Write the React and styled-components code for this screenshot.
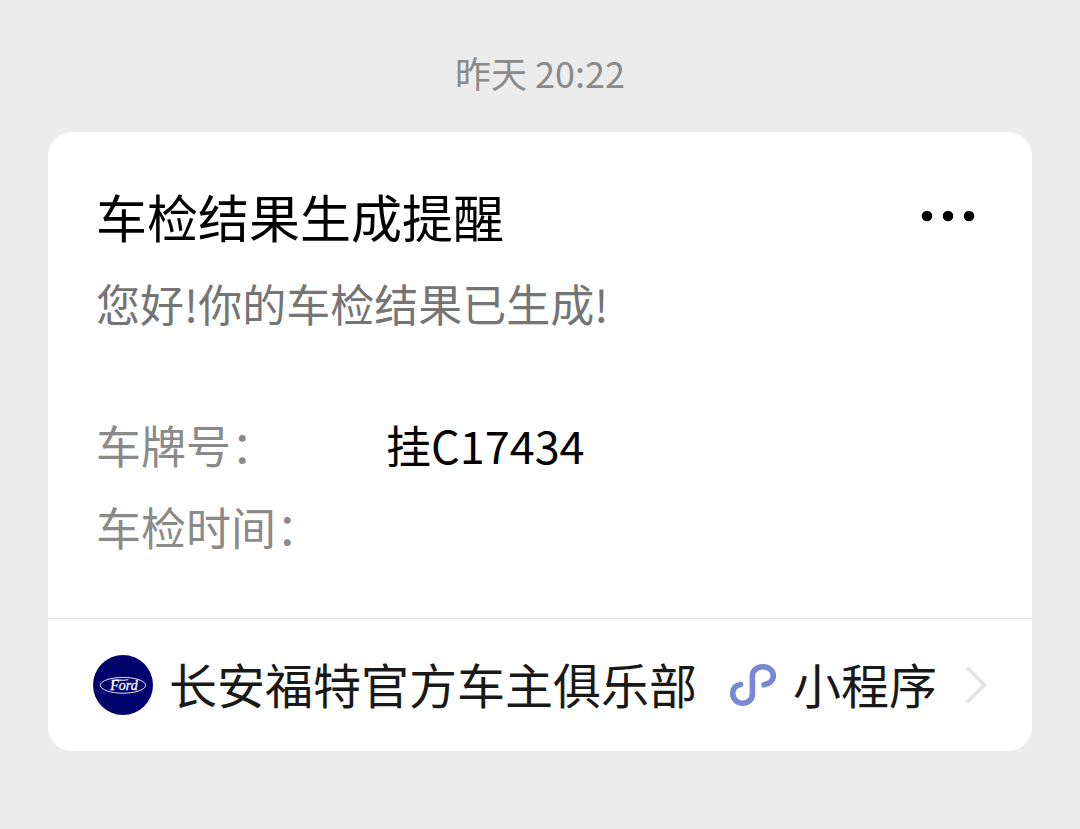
import React from "react";
import styled, { createGlobalStyle } from "styled-components";

const GlobalStyle = createGlobalStyle`
  *, *::before, *::after { box-sizing: border-box; }
  body {
    margin: 0;
    background: #ececec;
    font-family: "Noto Sans CJK SC", "Noto Sans", sans-serif;
    font-weight: 400;
  }
`;

const Page = styled.main`
  padding: 46px 48px;
`;

const Timestamp = styled.time`
  display: block;
  text-align: center;
  font-size: 36px;
  line-height: 52px;
  color: #8a8a8a;
`;

const Card = styled.article`
  margin-top: 34px;
  background: #fff;
  border-radius: 24px;
  overflow: hidden;
`;

const CardBody = styled.div`
  padding: 46px 48px 50px;
`;

const CardHeader = styled.header`
  display: flex;
  align-items: center;
  justify-content: space-between;
`;

const Title = styled.h1`
  margin: 0;
  font-size: 51px;
  line-height: 76px;
  font-weight: 400;
  color: #000;
`;

const MoreButton = styled.button`
  display: flex;
  padding: 9px;
  border: 0;
  background: none;
  color: #000;
  cursor: pointer;
`;

const Message = styled.p`
  margin: 8px 0 0;
  font-size: 44px;
  line-height: 82px;
  color: #757575;
`;

const Details = styled.dl`
  display: grid;
  grid-template-columns: 290px 1fr;
  grid-auto-rows: 82px;
  margin: 60px 0 0;
  font-size: 45px;
  line-height: 82px;
`;

const DetailLabel = styled.dt`
  color: #8a8a8a;
`;

const DetailValue = styled.dd`
  margin: 0;
  color: #000;
`;

const AccountLink = styled.a`
  display: flex;
  align-items: center;
  height: 133px;
  padding: 0 44px 0 45px;
  border-top: 1px solid #e4e4e4;
  font-size: 48px;
  line-height: 72px;
  color: #191919;
  text-decoration: none;
  white-space: nowrap;
`;

const LinkText = styled.span`
  padding-bottom: 4px;
  margin-left: 16px;
`;

const ServiceType = styled.span`
  display: flex;
  align-items: center;
  margin-left: 32px;
`;

const Icon = styled.svg`
  display: block;
  flex: none;
`;

const ChevronIcon = styled(Icon)`
  margin-left: auto;
`;

function MoreIcon() {
  return (
    <Icon width="54" height="12" viewBox="0 0 54 12" fill="currentColor" aria-hidden="true">
      <circle cx="6" cy="6" r="5.3" />
      <circle cx="27" cy="6" r="5.3" />
      <circle cx="48" cy="6" r="5.3" />
    </Icon>
  );
}

function FordLogo() {
  return (
    <Icon width="60" height="60" viewBox="0 0 60 60" role="img" aria-label="Ford">
      <circle cx="30" cy="30" r="30" fill="#02026c" />
      <ellipse cx="30" cy="30.3" rx="22.6" ry="7.9" fill="none" stroke="#fff" strokeWidth="0.9" />
      <path
        d="M20.5 29C18.2 28.6 18.6 25.6 22.5 25.1C26.5 24.6 30 26 35 24.8"
        fill="none"
        stroke="#fff"
        strokeWidth="1.1"
        strokeLinecap="round"
      />
      <text
        x="31"
        y="34.6"
        textAnchor="middle"
        fill="#fff"
        stroke="#fff"
        strokeWidth="0.3"
        fontFamily="'Liberation Serif', serif"
        fontStyle="italic"
        fontSize="14"
      >
        Ford
      </text>
    </Icon>
  );
}

function MiniProgramIcon() {
  return (
    <Icon width="48" height="44" viewBox="0 0 48 44" aria-hidden="true">
      <path
        d="M11.6 21.4C6.6 22.2 3.7 25.8 3.7 30.2C3.7 36 8 40.2 13.4 40.2C19 40.2 23.4 36.4 23.4 31V13C23.4 7.6 28 3.8 33.8 3.8C39.8 3.8 44.3 7.6 44.3 12.6C44.3 17.4 40.6 20.8 35 21.8"
        fill="none"
        stroke="#7888d2"
        strokeWidth="5.6"
        strokeLinecap="round"
      />
    </Icon>
  );
}

export default function App() {
  return (
    <>
      <GlobalStyle />
      <Page>
        <Timestamp>昨天 20:22</Timestamp>
        <Card>
          <CardBody>
            <CardHeader>
              <Title>车检结果生成提醒</Title>
              <MoreButton type="button" aria-label="更多">
                <MoreIcon />
              </MoreButton>
            </CardHeader>
            <Message>您好!你的车检结果已生成!</Message>
            <Details>
              <DetailLabel>车牌号：</DetailLabel>
              <DetailValue>挂C17434</DetailValue>
              <DetailLabel>车检时间：</DetailLabel>
              <DetailValue />
            </Details>
          </CardBody>
          <AccountLink href="#account">
            <FordLogo />
            <LinkText>长安福特官方车主俱乐部</LinkText>
            <ServiceType>
              <MiniProgramIcon />
              <LinkText>小程序</LinkText>
            </ServiceType>
            <ChevronIcon width="24" height="40" viewBox="0 0 24 40" fill="none" aria-hidden="true">
              <path d="M3 2.5L20.5 20L3 37.5" stroke="#e3e3e3" strokeWidth="3.6" />
            </ChevronIcon>
          </AccountLink>
        </Card>
      </Page>
    </>
  );
}
